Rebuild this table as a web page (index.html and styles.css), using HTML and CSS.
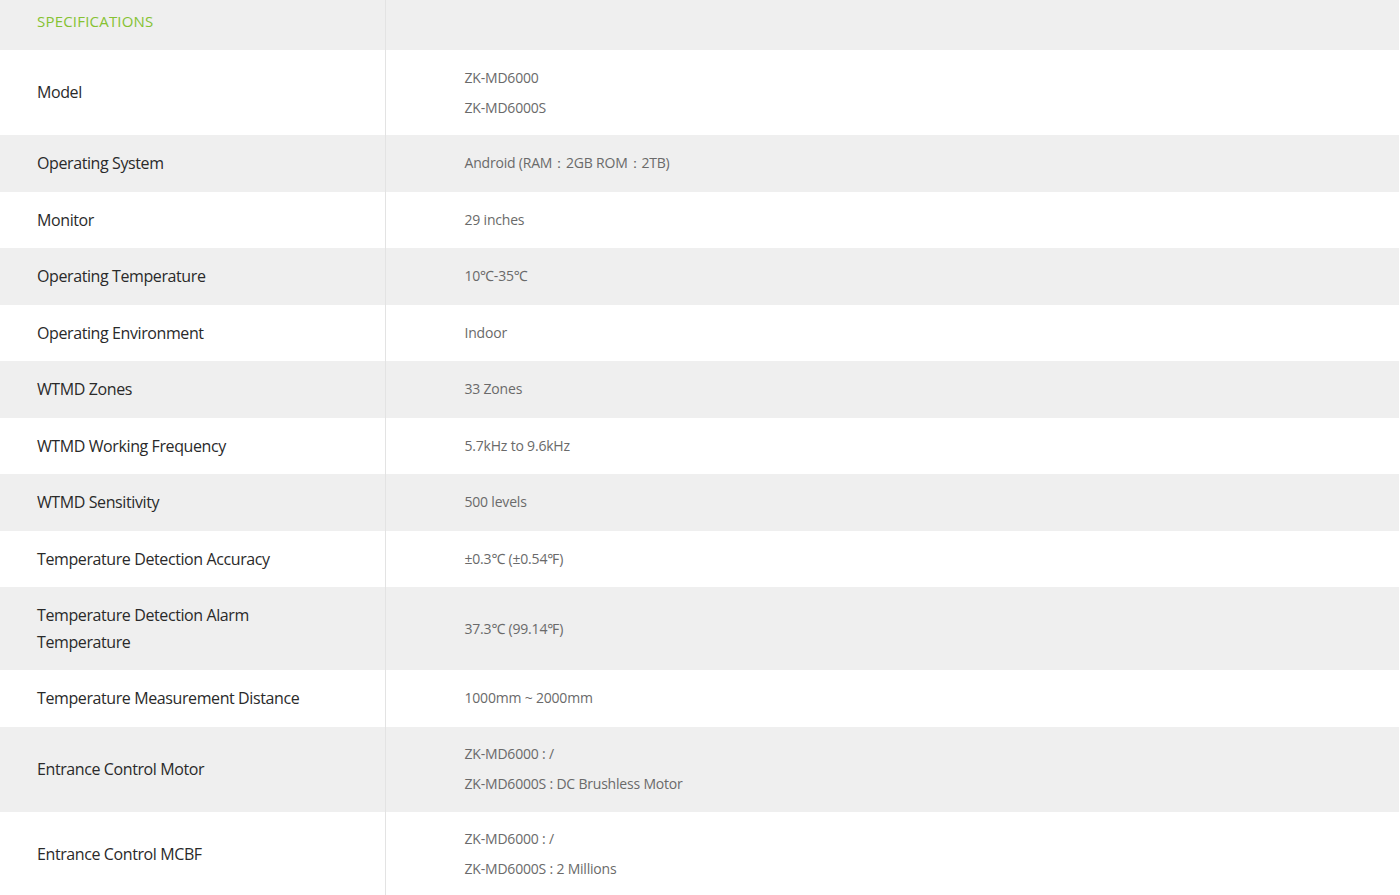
FILE: index.html
```html
<!DOCTYPE html>
<html>
<head>
<meta charset="utf-8">
<link rel="stylesheet" href="styles.css">
</head>
<body>
<table class="spec">
  <tr class="head"><th class="label">SPECIFICATIONS</th><th class="value"></th></tr>
  <tr><td class="label">Model</td><td class="value">ZK-MD6000<br>ZK-MD6000S</td></tr>
  <tr><td class="label">Operating System</td><td class="value">Android (RAM：2GB ROM：2TB)</td></tr>
  <tr><td class="label">Monitor</td><td class="value">29 inches</td></tr>
  <tr><td class="label">Operating Temperature</td><td class="value">10℃-35℃</td></tr>
  <tr><td class="label">Operating Environment</td><td class="value">Indoor</td></tr>
  <tr><td class="label">WTMD Zones</td><td class="value">33 Zones</td></tr>
  <tr><td class="label">WTMD Working Frequency</td><td class="value">5.7kHz to 9.6kHz</td></tr>
  <tr><td class="label">WTMD Sensitivity</td><td class="value">500 levels</td></tr>
  <tr><td class="label">Temperature Detection Accuracy</td><td class="value">±0.3℃ (±0.54℉)</td></tr>
  <tr><td class="label">Temperature Detection Alarm<br>Temperature</td><td class="value">37.3℃ (99.14℉)</td></tr>
  <tr><td class="label">Temperature Measurement Distance</td><td class="value">1000mm ~ 2000mm</td></tr>
  <tr><td class="label">Entrance Control Motor</td><td class="value">ZK-MD6000 : /<br>ZK-MD6000S : DC Brushless Motor</td></tr>
  <tr><td class="label">Entrance Control MCBF</td><td class="value">ZK-MD6000 : /<br>ZK-MD6000S : 2 Millions</td></tr>
</table>
</body>
</html>
```
FILE: styles.css
```css
html, body {
  margin: 0;
  padding: 0;
  background: #fff;
}
body {
  font-family: "Open Sans", "Noto Sans", sans-serif;
}
.spec {
  width: 1399px;
  border-collapse: collapse;
  table-layout: fixed;
}
.spec tr:nth-child(odd) {
  background: #efefef;
}
.spec tr:nth-child(even) {
  background: #fff;
}
.spec .label {
  width: 385px;
  box-sizing: border-box;
  border-right: 1px solid #e3e3e3;
  padding: 15px 20px 15px 37px;
  font-size: 16px;
  line-height: 26.5px;
  color: #2a2a2a;
  text-align: left;
  font-weight: 400;
  letter-spacing: -0.4px;
  vertical-align: middle;
}
.spec .value {
  padding: 12.5px 20px 12.5px 79px;
  font-size: 14px;
  line-height: 30px;
  color: #6a6a6a;
  text-align: left;
  letter-spacing: -0.2px;
  vertical-align: middle;
}
.spec .head th {
  height: 50px;
  padding-top: 0;
  padding-bottom: 8px;
  box-sizing: border-box;
}
.spec .head .label {
  color: #86c232;
  font-size: 15px;
  letter-spacing: 0.2px;
}
```
